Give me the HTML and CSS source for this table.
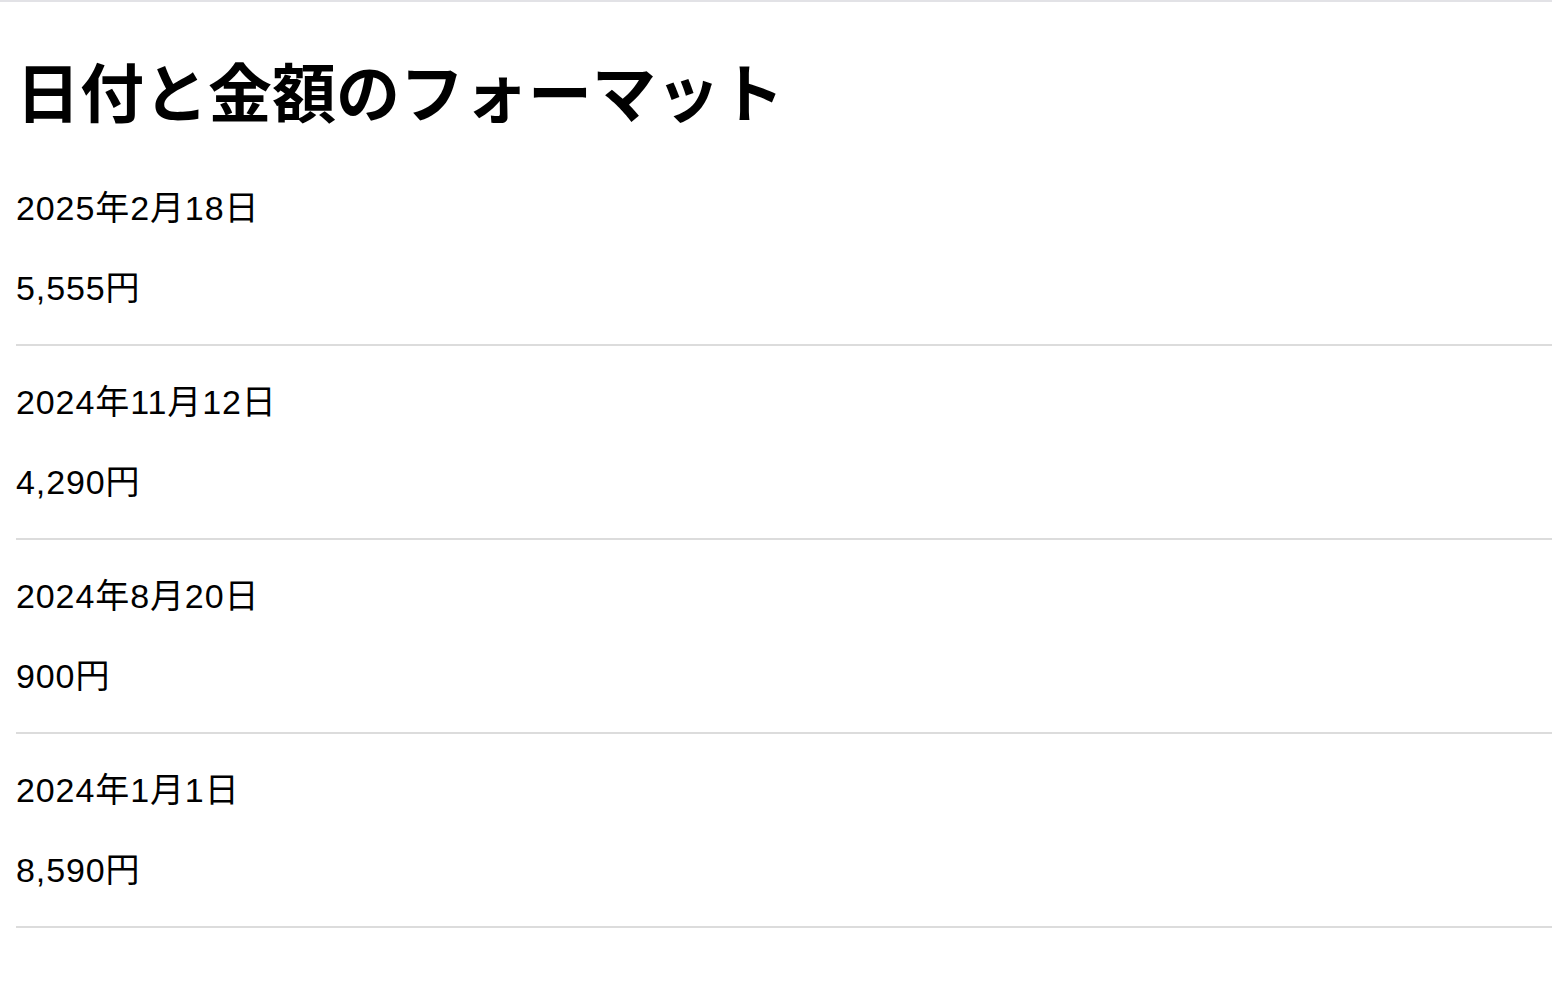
FILE: index.html
```html
<!DOCTYPE html>
<html lang="ja">
<head>
<meta charset="utf-8">
<title>日付と金額のフォーマット</title>
<link rel="stylesheet" href="styles.css">
</head>
<body>
<main class="page">
  <h1 class="title">日付と金額のフォーマット</h1>
  <ul class="list">
    <li class="item">
      <p class="date">2025年2月18日</p>
      <p class="amount">5,555円</p>
    </li>
    <li class="item">
      <p class="date">2024年11月12日</p>
      <p class="amount">4,290円</p>
    </li>
    <li class="item">
      <p class="date">2024年8月20日</p>
      <p class="amount">900円</p>
    </li>
    <li class="item">
      <p class="date">2024年1月1日</p>
      <p class="amount">8,590円</p>
    </li>
  </ul>
</main>
</body>
</html>
```
FILE: styles.css
```css
html, body {
  margin: 0;
  padding: 0;
  background: #ffffff;
}
body {
  border-top: 2px solid #e2e2e6;
  font-family: "Liberation Sans", "Noto Sans CJK JP", sans-serif;
  color: #000;
}
.page {
  padding-left: 16px;
}
.title {
  font-family: "Noto Sans CJK JP", sans-serif;
  font-size: 64px;
  font-weight: 700;
  line-height: 96px;
  margin: 39px 0 47px;
}
.list {
  list-style: none;
  margin: 0;
  padding: 0;
}
.item {
  border-bottom: 2px solid #dcdcdc;
}
.date, .amount {
  font-size: 34px;
  line-height: 48px;
  letter-spacing: 0.9px;
  margin: 32px 0;
}
```
